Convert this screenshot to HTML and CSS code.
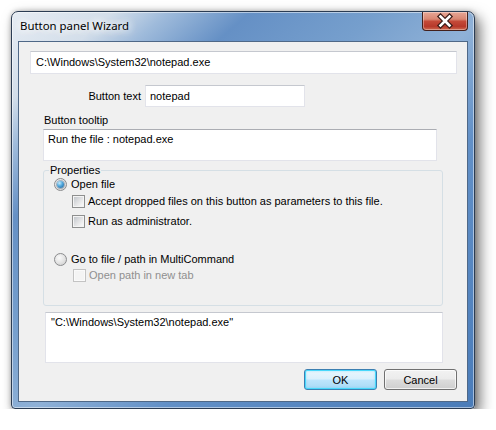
FILE: index.html
```html
<!DOCTYPE html>
<html>
<head>
<meta charset="utf-8">
<title>Button panel Wizard</title>
<link rel="stylesheet" href="styles.css">
</head>
<body>
<div class="window">
  <div class="titlebar">
    <span class="title">Button panel Wizard</span>
    <div class="close">
      <svg width="44" height="18" viewBox="0 0 44 18">
        <path d="M17.5 4.5 L26.5 13.5 M26.5 4.5 L17.5 13.5" stroke="#3a1c18" stroke-width="5" stroke-linecap="square" fill="none"/>
        <path d="M17.5 4.5 L26.5 13.5 M26.5 4.5 L17.5 13.5" stroke="#ffffff" stroke-width="2.6" stroke-linecap="square" fill="none"/>
      </svg>
    </div>
  </div>
  <div class="client">
    <div class="textbox path">C:\Windows\System32\notepad.exe</div>
    <div class="btnrow">
      <span class="btnlbl">Button text</span>
      <div class="textbox btntext">notepad</div>
    </div>
    <div class="ttlbl">Button tooltip</div>
    <div class="textbox tooltip">Run the file : notepad.exe</div>
    <fieldset class="group">
      <legend>Properties</legend>
      <div class="opt r1"><span class="radio checked"></span><span class="otext">Open file</span></div>
      <div class="opt r2"><span class="check"></span><span class="ctext">Accept dropped files on this button as parameters to this file.</span></div>
      <div class="opt r3"><span class="check"></span><span class="ctext">Run as administrator.</span></div>
      <div class="opt r4"><span class="radio"></span><span class="otext">Go to file / path in MultiCommand</span></div>
      <div class="opt r5 disabled"><span class="check"></span><span class="ctext">Open path in new tab</span></div>
    </fieldset>
    <div class="textbox command">"C:\Windows\System32\notepad.exe"</div>
    <div class="buttons">
      <button class="btn default">OK</button>
      <button class="btn">Cancel</button>
    </div>
  </div>
</div>
</body>
</html>
```
FILE: styles.css
```css
body {
  margin: 0;
  background: #ffffff;
  font-family: "Liberation Sans", Arial, sans-serif;
  font-size: 11px;
  color: #000;
}

.window {
  margin: 11px 0 0 11px;
  width: 464px;
  height: 398px;
  box-sizing: border-box;
  border: 1px solid #2b3c53;
  border-radius: 7px 7px 4px 4px;
  background: linear-gradient(139deg, #e6ecf3 0%, #d3deea 11%, #9fbbdb 17%, #6590c5 26%, #769fcd 40%, #8fb1d7 52%, #6290c7 66%, #4a7cb9 100%);
  box-shadow: inset 0 0 0 1px rgba(255,255,255,0.5), 5px 6px 14px rgba(0,0,0,0.55), 0 0 5px rgba(0,0,0,0.25);
  display: flex;
  flex-direction: column;
}

.titlebar {
  height: 29px;
  display: flex;
  justify-content: space-between;
  align-items: flex-start;
  padding-left: 8px;
}

.title {
  font-family: "Noto Sans", "Open Sans", sans-serif;
  font-size: 11.4px;
  line-height: 28px;
  color: #000;
  text-shadow: 0 0 8px #fff, 0 0 8px #fff, 0 0 12px rgba(255,255,255,0.9);
}

.close {
  width: 46px;
  height: 19px;
  margin-right: 6px;
  box-sizing: border-box;
  border: 1px solid #43201b;
  border-top: none;
  border-radius: 0 0 4px 4px;
  background: linear-gradient(#e7a796 0%, #d98672 40%, #c44a39 52%, #b7392b 80%, #cf6a50 100%);
  box-shadow: inset 0 0 0 1px rgba(255,255,255,0.35);
  display: flex;
  align-items: center;
  justify-content: center;
}

.close svg { display: block; }

.client {
  flex: 1;
  margin: 0 6px 6px 6px;
  border: 1px solid #4f6887;
  background: #f0f0f0;
  display: flex;
  flex-direction: column;
  align-items: flex-start;
}

.textbox {
  box-sizing: border-box;
  background: #fff;
  border: 1px solid #e2e3ea;
  border-top-color: #c5c8cf;
  white-space: nowrap;
}

.path {
  margin: 9px 0 0 11px;
  width: 427px;
  height: 23px;
  padding: 0 5px;
  line-height: 21px;
}

.btnrow {
  margin-top: 11px;
  display: flex;
  align-items: center;
}

.btnlbl {
  width: 122px;
  text-align: right;
  margin-right: 4px;
}

.btntext {
  width: 160px;
  height: 22px;
  padding: 0 4px;
  line-height: 20px;
}

.ttlbl {
  margin: 7px 0 0 25px;
  line-height: 13px;
}

.tooltip {
  margin: 2px 0 0 24px;
  width: 394px;
  height: 32px;
  padding: 3px 4px;
  line-height: 13px;
  border-top-color: #abadb3;
}

.group {
  margin: 3px 0 0 24px;
  width: 400px;
  box-sizing: border-box;
  border: 1px solid #d5dfe5;
  border-radius: 3px;
  padding: 0 0 23px 0;
  min-inline-size: 0;
}

.group legend {
  margin-left: 5px;
  padding: 0 1px;
  line-height: 13px;
}

.opt {
  display: flex;
  align-items: center;
  height: 13px;
  line-height: 13px;
  white-space: nowrap;
}

.r1 { height: 14px; margin-left: 10px; }
.r2 { margin: 4px 0 0 28px; }
.r3 { margin: 7px 0 0 28px; }
.r4 { height: 14px; margin: 24px 0 0 10px; }
.r5 { margin: 3px 0 0 29px; }

.otext { margin-left: 4px; }
.ctext { margin-left: 3px; }

.radio {
  width: 13px;
  height: 13px;
  box-sizing: border-box;
  border-radius: 50%;
  border: 1px solid #8b8c8e;
  background: radial-gradient(circle at 40% 35%, #fafafa 0%, #e4e4e4 50%, #c9c9c9 100%);
  display: flex;
  align-items: center;
  justify-content: center;
}

.radio.checked::after {
  content: "";
  width: 7px;
  height: 7px;
  border-radius: 50%;
  background: radial-gradient(circle at 35% 30%, #c6ecfc 0%, #4fa6dc 45%, #1c5a8e 100%);
  box-shadow: 0 0 0 1px rgba(30,70,110,0.35);
}

.check {
  width: 13px;
  height: 13px;
  box-sizing: border-box;
  border: 1px solid #8e8f8f;
  background: linear-gradient(135deg, #bcc1c7 0%, #dedfe1 45%, #f4f4f4 80%, #fafafa 100%);
  box-shadow: inset 0 0 0 1px #f4f4f4;
}

.disabled .check {
  border-color: #c3c3c3;
  background: #f4f4f4;
  box-shadow: inset 0 0 0 1px #fafafa;
}

.disabled .ctext { color: #8f8f8f; }

.command {
  margin: 6px 0 0 26px;
  width: 398px;
  height: 51px;
  padding: 3px 5px;
  line-height: 13px;
}

.buttons {
  margin: 6px 0 0 285px;
  display: flex;
  gap: 7px;
}

.btn {
  width: 73px;
  height: 21px;
  box-sizing: border-box;
  padding: 0;
  font-family: "Liberation Sans", Arial, sans-serif;
  font-size: 11px;
  color: #000;
  border: 1px solid #707070;
  border-radius: 3px;
  background: linear-gradient(#f2f2f2 0%, #ebebeb 49%, #dddddd 51%, #cfcfcf 100%);
  box-shadow: inset 0 0 0 1px rgba(255,255,255,0.7);
}

.btn.default {
  border-color: #3c7fb1;
  background: linear-gradient(#eaf6fd 0%, #d9f0fc 49%, #bee6fd 51%, #a7d9f5 100%);
  box-shadow: inset 0 0 0 1px #48d8fb, inset 0 0 2px 1px rgba(72,216,251,0.5);
}
```
